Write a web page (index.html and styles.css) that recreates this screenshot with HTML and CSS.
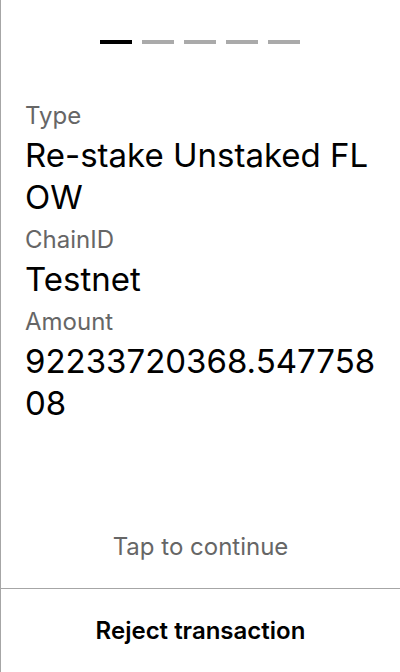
FILE: index.html
```html
<!DOCTYPE html>
<html>
<head>
<meta charset="utf-8">
<link rel="stylesheet" href="styles.css">
</head>
<body>
<div class="screen">
  <div class="steps">
    <span class="step active"></span>
    <span class="step"></span>
    <span class="step"></span>
    <span class="step"></span>
    <span class="step"></span>
  </div>
  <div class="fields">
    <div class="label">Type</div>
    <div class="value">Re-stake Unstaked FLOW</div>
    <div class="label">ChainID</div>
    <div class="value">Testnet</div>
    <div class="label">Amount</div>
    <div class="value">92233720368.54775808</div>
  </div>
  <div class="tap">Tap to continue</div>
  <div class="reject">Reject transaction</div>
</div>
</body>
</html>
```
FILE: styles.css
```css
* { box-sizing: border-box; }
html, body { margin: 0; padding: 0; background: #fff; }
body { font-family: Inter, "Noto Sans", sans-serif; color: #000; }
.screen {
  width: 400px;
  height: 672px;
  border-left: 1px solid #a6a6a6;
  display: flex;
  flex-direction: column;
}
.steps {
  display: flex;
  justify-content: center;
  gap: 10px;
  padding-top: 40px;
  padding-right: 1px;
}
.step {
  width: 32px;
  height: 4px;
  background: #aaaaaa;
}
.step.active { background: #000; }
.fields {
  padding: 54px 24px 0 24px;
  flex: 1;
}
.label {
  font-size: 24px;
  line-height: 36px;
  color: #666;
}
.value {
  font-size: 33px;
  line-height: 42px;
  color: #000;
  word-break: break-all;
  margin-bottom: 4px;
}
.tap {
  text-align: center;
  font-size: 24px;
  color: #666;
  line-height: 30px;
  padding-bottom: 26px;
}
.reject {
  border-top: 1px solid #a6a6a6;
  height: 84px;
  display: flex;
  align-items: center;
  justify-content: center;
  font-size: 24px;
  font-weight: 600;
}
```
